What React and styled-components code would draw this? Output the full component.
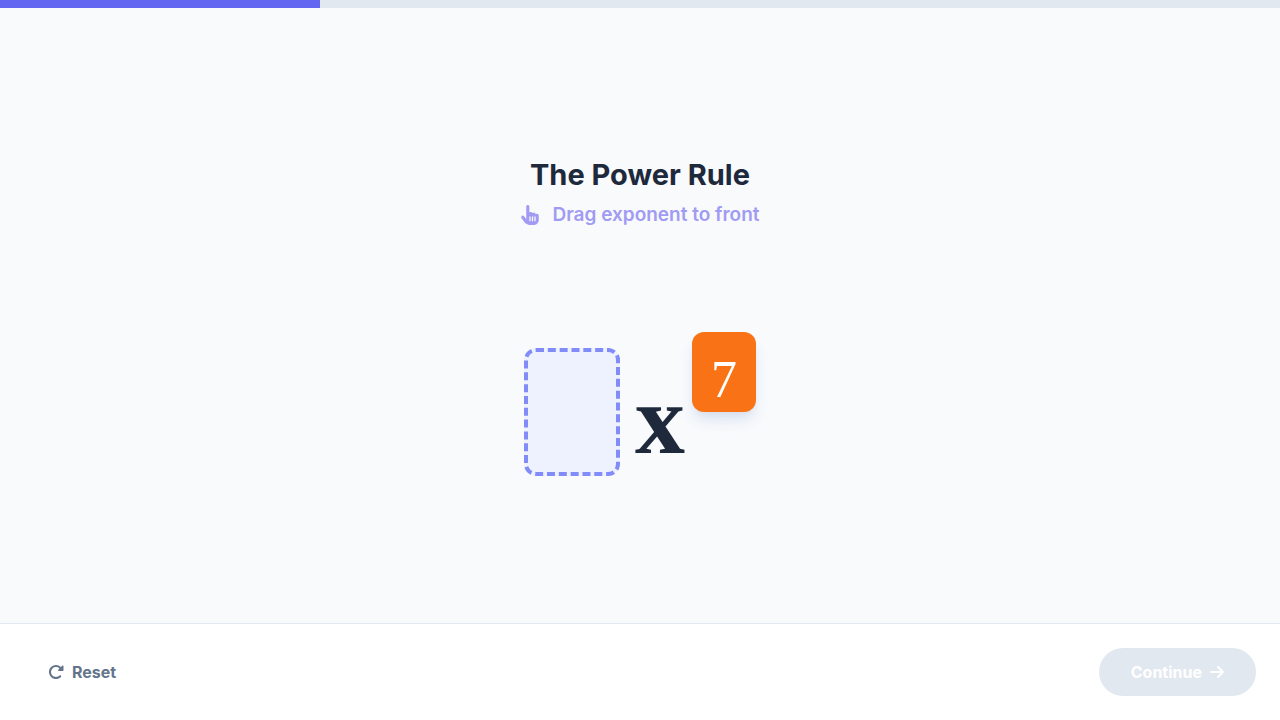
import React from "react";
import styled, { createGlobalStyle } from "styled-components";
import { FaArrowRight, FaHandPointer, FaRotateRight } from "react-icons/fa6";

const GlobalStyle = createGlobalStyle`
  *, *::before, *::after { box-sizing: border-box; }
  body {
    margin: 0;
    background: #f8fafc;
    color: #1e293b;
    font-family: Inter, "Liberation Sans", sans-serif;
  }
  button { font: inherit; border: 0; cursor: pointer; }
`;

const Page = styled.div`
  display: flex;
  flex-direction: column;
  min-height: 100vh;
`;

const Progress = styled.div`
  height: 8px;
  background: #e2e8f0;
`;

const ProgressFill = styled.div`
  height: 100%;
  background: #6366f1;
`;

const Main = styled.main`
  flex: 1;
  display: flex;
  flex-direction: column;
  align-items: center;
  justify-content: center;
  gap: 102px;
`;

const Heading = styled.header`
  text-align: center;
`;

const Title = styled.h1`
  margin: 0 0 6px;
  font-size: 29px;
  line-height: 38px;
  font-weight: 700;
`;

const Hint = styled.p`
  display: flex;
  align-items: center;
  justify-content: center;
  gap: 12px;
  margin: 0;
  font-size: 19px;
  line-height: 30px;
  font-weight: 600;
  color: #a19bf3;
`;

const Expression = styled.div`
  display: flex;
  align-items: flex-end;
  font-family: "Liberation Serif", serif;
`;

const DropZone = styled.div`
  width: 96px;
  height: 128px;
  margin-right: 16px;
  border: 4px dashed #818cf8;
  border-radius: 12px;
  background: #eef2ff;
`;

const Variable = styled.span`
  display: flex;
  justify-content: center;
  width: 48px;
  margin-right: 8px;
  font-size: 100px;
  line-height: 112px;
  font-weight: 700;
`;

const Exponent = styled.button`
  align-self: flex-start;
  width: 64px;
  height: 80px;
  padding: 16px 0 0;
  margin-bottom: 64px;
  border-radius: 12px;
  background: #f97316;
  color: #fff;
  && {
    font-family: "Liberation Serif", serif;
    font-size: 52px;
    line-height: 48px;
  }
  box-shadow: 0 10px 15px -3px #d8e0f0, 0 4px 6px -4px #cbd5e1;
`;

const Footer = styled.footer`
  display: flex;
  align-items: center;
  justify-content: space-between;
  padding: 24px;
  border-top: 1px solid #e2e8f0;
  background: #fff;
`;

const Action = styled.button`
  display: flex;
  align-items: center;
  gap: 8px;
  height: 48px;
  padding: 0 ${(p) => (p.$filled ? 32 : 24)}px;
  border-radius: 24px;
  background: ${(p) => (p.$filled ? "#e2e8f0" : "transparent")};
  color: ${(p) => (p.$filled ? "#fff" : "#64748b")};
  && {
    font-size: 16px;
    line-height: 24px;
    font-weight: 700;
  }
`;

const ArrowIcon = styled(FaArrowRight)`
  width: 14px;
  height: 16px;
`;

export default function App() {
  return (
    <Page>
      <GlobalStyle />
      <Progress role="progressbar" aria-label="Lesson progress" aria-valuenow={25} aria-valuemin={0} aria-valuemax={100}>
        <ProgressFill style={{ width: "25%" }} />
      </Progress>
      <Main>
        <Heading>
          <Title>The Power Rule</Title>
          <Hint><FaHandPointer size={20} aria-hidden="true" />Drag exponent to front</Hint>
        </Heading>
        <Expression>
          <DropZone />
          <Variable>x</Variable>
          <Exponent type="button">7</Exponent>
        </Expression>
      </Main>
      <Footer>
        <Action type="button"><FaRotateRight size={16} aria-hidden="true" />Reset</Action>
        <Action type="button" $filled disabled>Continue<ArrowIcon aria-hidden="true" /></Action>
      </Footer>
    </Page>
  );
}
